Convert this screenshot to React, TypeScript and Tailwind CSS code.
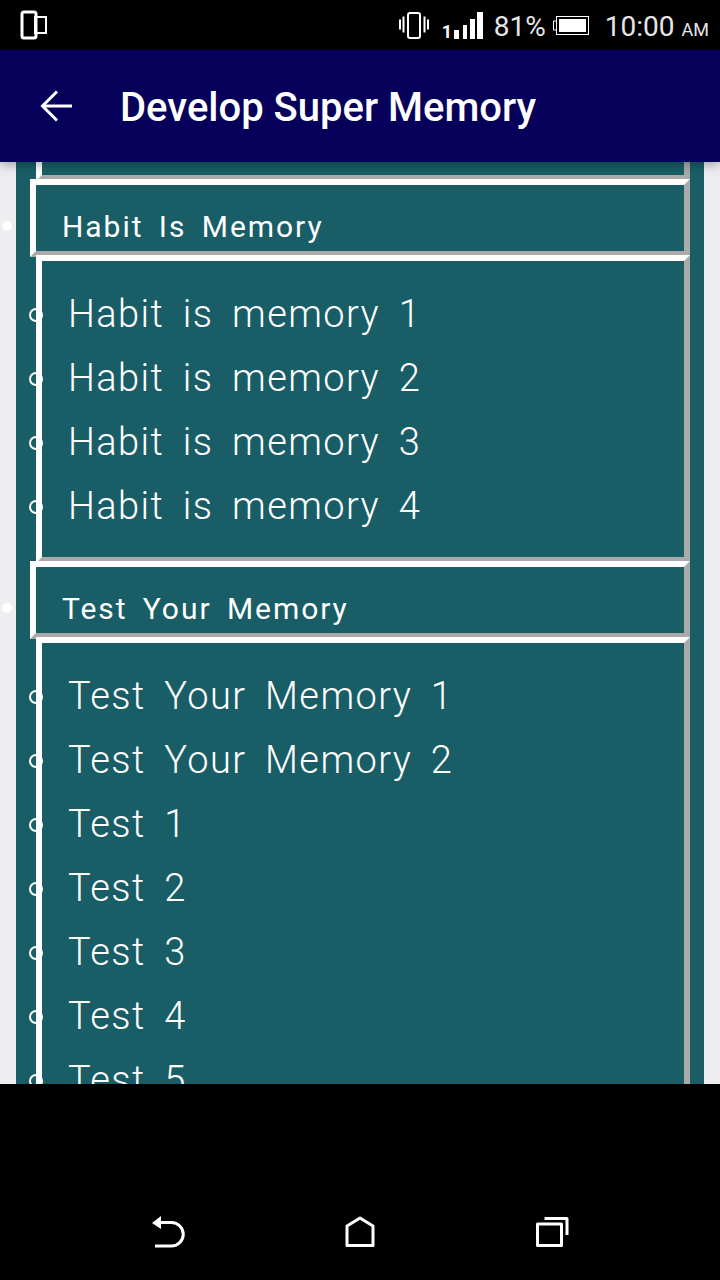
// ─── Data ─────────────────────────────────────────────

const SECTIONS = [
  {
    title: 'Habit Is Memory',
    items: ['Habit is memory 1', 'Habit is memory 2', 'Habit is memory 3', 'Habit is memory 4'],
  },
  {
    title: 'Test Your Memory',
    items: ['Test Your Memory 1', 'Test Your Memory 2', 'Test 1', 'Test 2', 'Test 3', 'Test 4', 'Test 5'],
  },
]

// ─── Icons ────────────────────────────────────────────

function DualPhoneIcon() {
  return (
    <svg width="28" height="30" viewBox="0 0 28 30" fill="none" stroke="white">
      <rect x="2" y="2" width="14" height="26" rx="2" strokeWidth="3" />
      <rect x="15" y="7" width="11" height="16" strokeWidth="2" />
    </svg>
  )
}

function VibrateIcon() {
  return (
    <svg width="30" height="28" viewBox="0 0 30 28" fill="none" stroke="white" strokeWidth="2">
      <rect x="9" y="2" width="12" height="25" rx="2" />
      <path d="M1 8.500v10M4.500 5.500v16M25.500 5.500v16M29 8.500v10" />
    </svg>
  )
}

function SignalIcon() {
  return (
    <svg width="29" height="28" viewBox="0 0 29 28" fill="white">
      <rect x="0" y="18" width="5" height="9" />
      <rect x="9" y="13" width="4" height="14" />
      <rect x="16" y="7" width="5" height="20" />
      <rect x="23" y="0" width="6" height="27" />
    </svg>
  )
}

function BatteryIcon() {
  return (
    <svg width="36" height="19" viewBox="0 0 36 19" fill="none">
      <path d="M3.500 5H0.500v9h3" stroke="white" strokeWidth="1" />
      <rect x="3.500" y="0.500" width="32" height="18" stroke="white" strokeWidth="1" />
      <rect x="6" y="3" width="27" height="13" fill="white" />
    </svg>
  )
}

function BackIcon() {
  return (
    <svg width="32" height="32" viewBox="0 0 32 32" fill="none" stroke="white" strokeWidth="3">
      <path d="M17 1.500L2.500 16 17 30.500" />
      <path d="M3 16H32" />
    </svg>
  )
}

function NavBackIcon() {
  return (
    <svg width="34" height="32" viewBox="0 0 34 32" fill="none" stroke="white" strokeWidth="3">
      <path d="M7 6.500H20.500a11.700 11.700 0 0 1 0 23.500H4" />
      <path d="M1 7L10 0V13z" fill="white" stroke="none" />
    </svg>
  )
}

function HomeIcon() {
  return (
    <svg width="30" height="32" viewBox="0 0 30 32" fill="none" stroke="white" strokeWidth="3" strokeLinejoin="round">
      <path d="M2 29.500V10L15 2l13 8v19.500z" />
    </svg>
  )
}

function RecentsIcon() {
  return (
    <svg width="34" height="32" viewBox="0 0 34 32" fill="none" stroke="white" strokeWidth="3" strokeLinejoin="round">
      <rect x="2.500" y="8" width="24" height="21.500" />
      <path d="M9.500 2.500H32V19" />
    </svg>
  )
}

// ─── Section ──────────────────────────────────────────

const BOX = 'border-[6px] border-t-white border-l-white border-r-[#aaaaaa] border-b-[#aaaaaa]'

function Section({ title, items }: { title: string; items: string[] }) {
  return (
    <>
      <div className={`relative z-0 -mt-[2px] ml-[14px] h-[78px] pl-[26px] pt-[20px] ${BOX}`}>
        <span className="absolute -left-[34px] top-[36px] h-[10px] w-[10px] rounded-full bg-white" />
        <h2 className="text-[30px] leading-[44px] tracking-[1.95px] [word-spacing:6px] text-white">{title}</h2>
      </div>
      <ul className={`relative -mt-[2px] ml-[20px] pb-[19px] pl-[26px] pt-[21px] ${BOX}`}>
        {items.map((item) => (
          <li key={item} className="relative h-[64px] text-[38px] font-light leading-[64px] tracking-[1.4px] [word-spacing:8px] text-white">
            <span className="absolute -left-[39px] top-[26px] h-[14px] w-[14px] rounded-full border-2 border-white" />
            {item}
          </li>
        ))}
      </ul>
    </>
  )
}

// ─── App ──────────────────────────────────────────────

export default function App() {
  return (
    <div className="flex h-[1280px] w-[720px] flex-col overflow-hidden bg-black font-['Roboto',sans-serif]">
      {/* Status bar */}
      <div className="flex h-[50px] shrink-0 items-center bg-black pl-[20px] pr-[11px] text-white">
        <DualPhoneIcon />
        <div className="ml-auto flex items-center">
          <VibrateIcon />
          <span className="ml-[13px] mt-[13px] w-[12px] text-[18px] font-bold leading-[20px]">1</span>
          <span className="mt-[1px]"><SignalIcon /></span>
          <div className="ml-[11px] mt-[3px] flex items-baseline text-[#e6e6e6]">
            <span className="text-[28px] leading-[40px]">81%</span>
          </div>
          <span className="ml-[7px] mt-[1px]"><BatteryIcon /></span>
          <div className="ml-[16px] mt-[7px] flex items-baseline text-[#e6e6e6]">
            <span className="text-[28px] leading-[40px]">10:00</span>
            <span className="ml-[7px] text-[18px] leading-[40px]">AM</span>
          </div>
        </div>
      </div>

      {/* App bar */}
      <header className="relative z-10 flex h-[112px] shrink-0 items-center bg-[#07005a] pl-[40px] shadow-[0_3px_10px_rgba(0,0,0,0.3)]">
        <BackIcon />
        <h1 className="ml-[48px] mt-[4px] text-[40px] font-medium leading-[48px] text-white">Develop Super Memory</h1>
      </header>

      {/* Content */}
      <main className="h-[922px] shrink-0 overflow-hidden bg-[#eeeef0] px-[16px]">
        <div className="flex min-h-full flex-col bg-[#195e66] pr-[14px]">
          <div className={`ml-[20px] h-[19px] shrink-0 !border-t-0 ${BOX}`} />
          {SECTIONS.map((s) => (
            <Section key={s.title} title={s.title} items={s.items} />
          ))}
        </div>
      </main>

      {/* Nav bar */}
      <nav className="flex h-[196px] shrink-0 items-start justify-between bg-black px-[151px] pt-[132px]">
        <NavBackIcon />
        <HomeIcon />
        <RecentsIcon />
      </nav>
    </div>
  )
}
